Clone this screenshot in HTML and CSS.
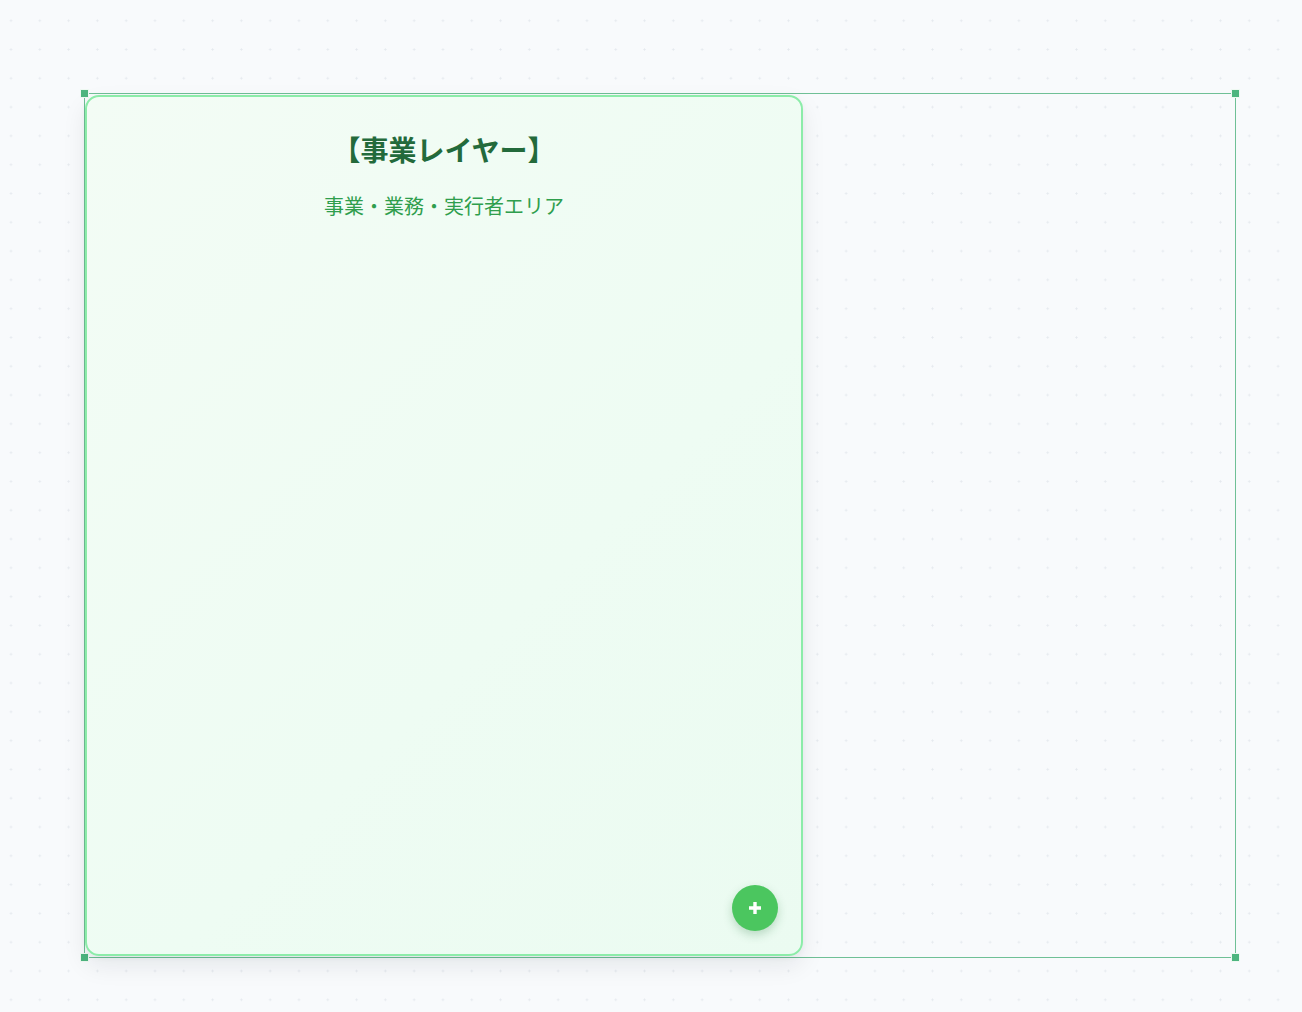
FILE: index.html
```html
<!DOCTYPE html>
<html lang="ja">
<head>
<meta charset="utf-8">
<link rel="stylesheet" href="styles.css">
</head>
<body>
<div class="canvas">
  <div class="selection">
    <span class="handle tl"></span>
    <span class="handle tr"></span>
    <span class="handle bl"></span>
    <span class="handle br"></span>
    <div class="layer-card">
      <h1 class="layer-title">【事業レイヤー】</h1>
      <p class="layer-sub">事業・業務・実行者エリア</p>
      <button class="add-btn" aria-label="追加">
        <svg width="16" height="16" viewBox="0 0 16 16"><path d="M8 2v12M2 8h12" stroke="#fff" stroke-width="3.4" stroke-linecap="butt"/></svg>
      </button>
    </div>
  </div>
</div>
</body>
</html>
```
FILE: styles.css
```css
html, body {
  margin: 0;
  padding: 0;
}
body {
  width: 1302px;
  height: 1012px;
  overflow: hidden;
  background-color: #f8fafc;
  background-image: radial-gradient(circle, #e5e9ee 0.9px, transparent 1.2px);
  background-size: 28.8px 28.8px;
  background-position: -3.4px 6.3px;
  font-family: "Noto Sans CJK JP", "Noto Sans", sans-serif;
}
.canvas {
  padding: 93px 0 0 84px;
}
.selection {
  position: relative;
  width: 1150px;
  height: 862px;
  border: 1px solid #6fc096;
  padding-top: 1px;
}
.handle {
  position: absolute;
  width: 9px;
  height: 9px;
  background: #4db57f;
  border: 1px solid #eef9f2;
  box-sizing: border-box;
}
.handle.tl { left: -5px; top: -5px; }
.handle.tr { right: -5px; top: -5px; }
.handle.bl { left: -5px; bottom: -5px; }
.handle.br { right: -5px; bottom: -5px; }
.layer-card {
  position: relative;
  width: 718px;
  height: 861px;
  box-sizing: border-box;
  border: 2px solid #8ceca9;
  border-radius: 14px;
  background: linear-gradient(135deg, #f3fcf5 0%, #eefcf3 60%, #ebfbf1 100%);
  box-shadow: 0 10px 24px rgba(15, 23, 42, 0.08), 0 2px 6px rgba(15, 23, 42, 0.04);
  display: flex;
  flex-direction: column;
  align-items: center;
  padding-top: 32px;
}
.layer-title {
  margin: 0;
  font-size: 28px;
  line-height: 40px;
  font-weight: 700;
  color: #236a3b;
}
.layer-sub {
  margin: 23px 0 0;
  font-size: 20px;
  line-height: 28px;
  color: #2f9e4d;
}
.add-btn {
  position: absolute;
  right: 23px;
  bottom: 23px;
  width: 46px;
  height: 46px;
  border: none;
  border-radius: 50%;
  background: #4bc65f;
  box-shadow: 0 4px 10px rgba(34, 120, 60, 0.25);
  display: flex;
  align-items: center;
  justify-content: center;
  padding: 0;
  cursor: pointer;
}
```
